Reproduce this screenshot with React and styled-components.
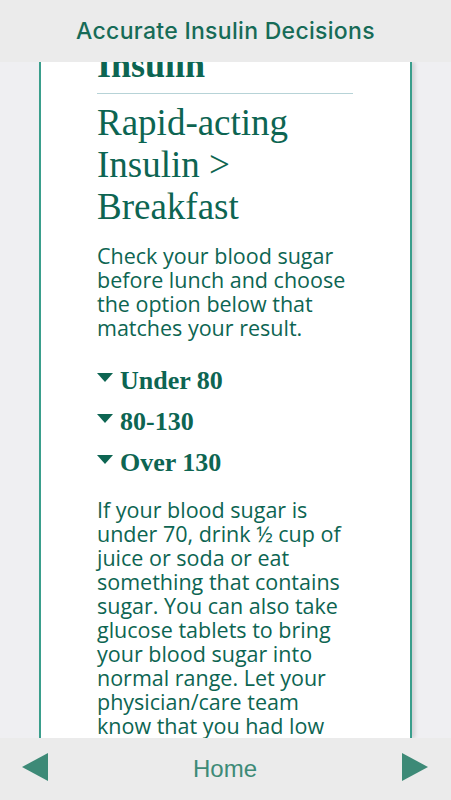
import React from "react";
import styled, { createGlobalStyle } from "styled-components";

const GlobalStyle = createGlobalStyle`
  html, body {
    margin: 0;
    padding: 0;
    background: #efeff2;
  }
`;

const options = ["Under 80", "80-130", "Over 130"];

const App = () => {
  return (
    <>
      <GlobalStyle />
      <Pantalla>
        <Cabecera>
          <TituloApp>Accurate Insulin Decisions</TituloApp>
        </Cabecera>
        <Zona>
          <Tarjeta>
            <Contenido>
              <Seccion>Insulin</Seccion>
              <Divisor />
              <Titulo>
                Rapid-acting
                <br />
                Insulin &gt;
                <br />
                Breakfast
              </Titulo>
              <Texto>
                Check your blood sugar before lunch and choose the option below
                that matches your result.
              </Texto>
              <Opciones>
                {options.map((o) => (
                  <Opcion key={o}>
                    <svg width="16" height="9" viewBox="0 0 16 9">
                      <polygon points="0,0 16,0 8,9" fill="#0d6552" />
                    </svg>
                    {o}
                  </Opcion>
                ))}
              </Opciones>
              <Texto $top={15}>
                If your blood sugar is under 70, drink ½ cup of juice or soda
                or eat something that contains sugar. You can also take glucose
                tablets to bring your blood sugar into normal range. Let your
                physician/care team know that you had low blood sugar.
              </Texto>
            </Contenido>
          </Tarjeta>
        </Zona>
        <Pie>
          <Flecha>
            <svg width="26" height="28" viewBox="0 0 26 28">
              <polygon points="0,14 26,0 26,28" fill="#3d8a77" />
            </svg>
          </Flecha>
          <Inicio>Home</Inicio>
          <Flecha>
            <svg width="26" height="28" viewBox="0 0 26 28">
              <polygon points="0,0 26,14 0,28" fill="#3d8a77" />
            </svg>
          </Flecha>
        </Pie>
      </Pantalla>
    </>
  );
};

export default App;

const Pantalla = styled.div`
  width: 451px;
  height: 800px;
  display: flex;
  flex-direction: column;
  overflow: hidden;
  background: #efeff2;
`;

const Cabecera = styled.header`
  height: 62px;
  flex-shrink: 0;
  background: #ebebeb;
  display: flex;
  align-items: center;
  justify-content: center;
  position: relative;
  z-index: 2;
`;

const TituloApp = styled.h1`
  margin: 0;
  font-family: Inter, "Liberation Sans", sans-serif;
  font-weight: 500;
  font-size: 23px;
  letter-spacing: 0.3px;
  color: #176b57;
`;

const Zona = styled.main`
  flex: 1;
  overflow: hidden;
  padding: 0 39px;
`;

const Tarjeta = styled.div`
  height: 100%;
  background: #fff;
  border-left: 2px solid #3a9e8c;
  border-right: 2px solid #3a9e8c;
  box-shadow: 3px 0 4px rgba(0, 0, 0, 0.12);
  overflow: hidden;
`;

const Contenido = styled.div`
  margin-top: -18px;
  padding: 0 57px 0 56px;
  color: #0d6552;
`;

const Seccion = styled.h2`
  margin: 0;
  font-family: "Liberation Serif", serif;
  font-weight: 700;
  font-size: 36px;
  line-height: 42px;
`;

const Divisor = styled.hr`
  margin: 7px 0 0;
  border: none;
  border-top: 1px solid #b7d3d7;
`;

const Titulo = styled.h3`
  margin: 8px 0 0;
  font-family: "Liberation Serif", serif;
  font-weight: 400;
  font-size: 37px;
  line-height: 42px;
`;

const Texto = styled.p`
  margin: ${(p) => p.$top ?? 16}px 0 0;
  font-family: "Open Sans", sans-serif;
  font-size: 21.5px;
  line-height: 24px;
`;

const Opciones = styled.div`
  margin-top: 20px;
  display: flex;
  flex-direction: column;
`;

const Opcion = styled.div`
  display: flex;
  align-items: center;
  gap: 7px;
  font-family: "Liberation Serif", serif;
  font-weight: 700;
  font-size: 26px;
  line-height: 41px;

  svg {
    margin-top: -6px;
  }
`;

const Pie = styled.footer`
  height: 62px;
  flex-shrink: 0;
  background: #ebebeb;
  display: flex;
  align-items: center;
  justify-content: space-between;
  padding: 0 23px 0 22px;
`;

const Flecha = styled.div`
  display: flex;
  margin-top: -5px;
`;

const Inicio = styled.span`
  font-family: "Liberation Sans", sans-serif;
  font-size: 24px;
  color: #3d8a77;
`;
